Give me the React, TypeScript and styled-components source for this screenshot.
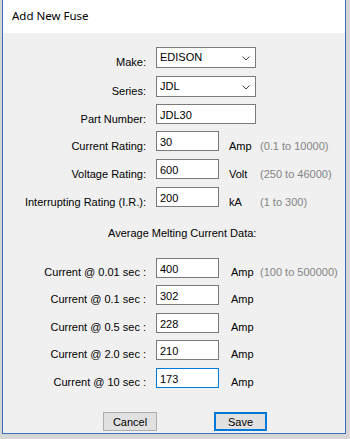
import React from 'react'
import styled, { createGlobalStyle } from 'styled-components'

const GlobalStyle = createGlobalStyle`
  html, body {
    margin: 0;
    padding: 0;
    background: #d6d6d6;
  }
  * {
    box-sizing: border-box;
  }
`

const Screen_ = styled.div({
  width: '350px',
  height: '439px',
  paddingLeft: '2px',
  overflow: 'hidden',
})

const Window_ = styled.div({
  width: '344px',
  height: '434px',
  background: '#f0f0f0',
  borderLeft: '1px solid #3b6fbd',
  borderRight: '1px solid #3b6fbd',
  borderBottom: '1px solid #3b6fbd',
  display: 'flex',
  flexDirection: 'column',
  fontFamily: '"Liberation Sans", Arial, sans-serif',
  fontSize: '11px',
  lineHeight: '13px',
  color: '#000',
})

const TitleBar_ = styled.div({
  height: '33px',
  flexShrink: 0,
  background: '#fff',
  display: 'flex',
  alignItems: 'center',
  paddingLeft: '9px',
  paddingBottom: '2px',
  fontFamily: '"Noto Sans", "Open Sans", sans-serif',
  fontSize: '11.5px',
  color: '#000',
})

const Body_ = styled.div({
  paddingTop: '14px',
  display: 'flex',
  flexDirection: 'column',
})

const Row_ = styled.div<{ $h: number }>(({ $h }) => ({
  height: `${$h}px`,
  display: 'flex',
  alignItems: 'flex-start',
}))

const Label_ = styled.div<{ $top: number }>(({ $top }) => ({
  width: '143px',
  marginRight: '10px',
  textAlign: 'right',
  whiteSpace: 'nowrap',
  paddingTop: `${$top}px`,
}))

const FieldSlot_ = styled.div<{ $w: number }>(({ $w }) => ({
  width: `${$w}px`,
  flexShrink: 0,
}))

const TextBox_ = styled.input<{ $w: number; $focus?: boolean }>(
  ({ $w, $focus }) => ({
    width: `${$w}px`,
    height: '20px',
    margin: 0,
    padding: '1px 3px 0',
    border: `1px solid ${$focus ? '#0078d7' : '#7a7a7a'}`,
    borderRadius: 0,
    background: '#fff',
    fontFamily: '"Liberation Sans", Arial, sans-serif',
    fontSize: '11px',
    color: '#000',
    outline: 'none',
  })
)

const Combo_ = styled.div({
  position: 'relative',
  width: '100px',
  height: '21px',
  border: '1px solid #7a7a7a',
  background: '#fff',
  display: 'flex',
  alignItems: 'center',
  padding: '0 3px 1px',
})

const ComboArrow_ = styled.svg({
  position: 'absolute',
  right: '5px',
  top: '8px',
})

const Unit_ = styled.div<{ $w: number; $top: number }>(({ $w, $top }) => ({
  width: `${$w}px`,
  paddingTop: `${$top}px`,
  flexShrink: 0,
}))

const Hint_ = styled.div<{ $top: number }>(({ $top }) => ({
  paddingTop: `${$top}px`,
  color: '#848484',
  whiteSpace: 'nowrap',
}))

const SectionTitle_ = styled.div({
  marginTop: '12px',
  marginBottom: '18px',
  paddingLeft: '105px',
})

const ButtonRow_ = styled.div({
  marginTop: '16px',
  paddingLeft: '100px',
  display: 'flex',
  gap: '57px',
})

const Button_ = styled.button<{ $primary?: boolean; $w: number }>(
  ({ $primary, $w }) => ({
    width: `${$w}px`,
    height: '19px',
    margin: 0,
    padding: 0,
    background: '#e1e1e1',
    border: $primary ? '2px solid #0078d7' : '1px solid #adadad',
    borderRadius: 0,
    fontFamily: '"Liberation Sans", Arial, sans-serif',
    fontSize: '11px',
    color: '#000',
  })
)

const Chevron = () => (
  <ComboArrow_ width="8" height="5" viewBox="0 0 8 5">
    <path d="M0.5 0.5 L4 4 L7.5 0.5" fill="none" stroke="#404040" strokeWidth="1" />
  </ComboArrow_>
)

type NumRow = { label: string; value: string; unit: string; hint?: string; h: number; focus?: boolean }

const ratingRows: NumRow[] = [
  { label: 'Current Rating:', value: '30', unit: 'Amp', hint: '(0.1 to 10000)', h: 28 },
  { label: 'Voltage Rating:', value: '600', unit: 'Volt', hint: '(250 to 46000)', h: 28 },
  { label: 'Interrupting Rating (I.R.):', value: '200', unit: 'kA', hint: '(1 to 300)', h: 28 },
]

const meltRows: NumRow[] = [
  { label: 'Current @ 0.01 sec :', value: '400', unit: 'Amp', hint: '(100 to 500000)', h: 27 },
  { label: 'Current @ 0.1 sec :', value: '302', unit: 'Amp', h: 28 },
  { label: 'Current @ 0.5 sec :', value: '228', unit: 'Amp', h: 27 },
  { label: 'Current @ 2.0 sec :', value: '210', unit: 'Amp', h: 28 },
  { label: 'Current @ 10 sec :', value: '173', unit: 'Amp', h: 28, focus: true },
]

export default function App() {
  return (
    <Screen_>
      <GlobalStyle />
      <Window_>
        <TitleBar_>Add New Fuse</TitleBar_>
        <Body_>
          <Row_ $h={29}>
            <Label_ $top={9}>Make:</Label_>
            <Combo_>
              EDISON
              <Chevron />
            </Combo_>
          </Row_>
          <Row_ $h={28}>
            <Label_ $top={9}>Series:</Label_>
            <Combo_>
              JDL
              <Chevron />
            </Combo_>
          </Row_>
          <Row_ $h={27}>
            <Label_ $top={9}>Part Number:</Label_>
            <TextBox_ $w={100} defaultValue="JDL30" />
          </Row_>
          {ratingRows.map((r) => (
            <Row_ key={r.label} $h={r.h}>
              <Label_ $top={9}>{r.label}</Label_>
              <FieldSlot_ $w={73}>
                <TextBox_ $w={63} defaultValue={r.value} />
              </FieldSlot_>
              <Unit_ $w={31} $top={9}>{r.unit}</Unit_>
              {r.hint && <Hint_ $top={9}>{r.hint}</Hint_>}
            </Row_>
          ))}
          <SectionTitle_>Average Melting Current Data:</SectionTitle_>
          {meltRows.map((r) => (
            <Row_ key={r.label} $h={r.h}>
              <Label_ $top={8}>{r.label}</Label_>
              <FieldSlot_ $w={75}>
                <TextBox_ $w={63} $focus={r.focus} defaultValue={r.value} />
              </FieldSlot_>
              <Unit_ $w={29} $top={8}>{r.unit}</Unit_>
              {r.hint && <Hint_ $top={8}>{r.hint}</Hint_>}
            </Row_>
          ))}
          <ButtonRow_>
            <Button_ $w={54}>Cancel</Button_>
            <Button_ $w={53} $primary>
              Save
            </Button_>
          </ButtonRow_>
        </Body_>
      </Window_>
    </Screen_>
  )
}
